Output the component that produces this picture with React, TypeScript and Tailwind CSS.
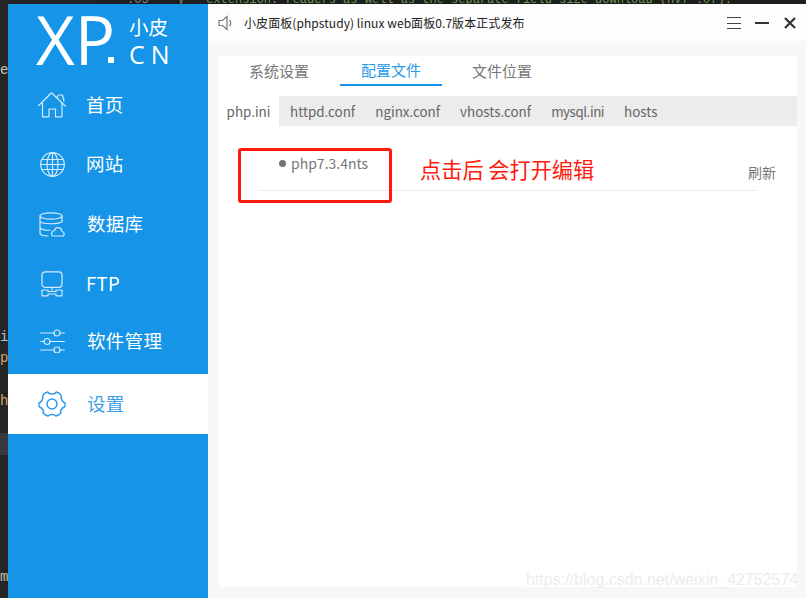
const font = "font-['Noto_Sans_CJK_SC','Noto_Sans',sans-serif]";

function NavIcon({ name, color }: { name: string; color: string }) {
  const p = { fill: "none", stroke: color, strokeWidth: 1.2, strokeLinecap: "round" as const, strokeLinejoin: "round" as const };
  if (name === "home")
    return (
      <svg width="28" height="26" viewBox="0 0 28 26" {...p}>
        <path d="M0.700 13.500 L13.500 0.800 L27.300 14" />
        <path d="M19 5.500 L20.500 3 H24.500 L26 9" />
        <path d="M4.500 11 V24.800 H11 V17 H17.500 V24.800 H24 V11" />
      </svg>
    );
  if (name === "globe")
    return (
      <svg width="25" height="25" viewBox="0 0 25 25" {...p}>
        <circle cx="12.500" cy="12.500" r="11.800" />
        <ellipse cx="12.500" cy="12.500" rx="5.500" ry="11.800" />
        <path d="M12.500 0.700 V24.300 M0.700 12.500 H24.300 M2.500 7.500 H22.500 M2.500 17.500 H22.500" />
      </svg>
    );
  if (name === "db")
    return (
      <svg width="26" height="25" viewBox="0 0 26 25" {...p}>
        <ellipse cx="12" cy="4" rx="11" ry="3.200" />
        <path d="M1 4 V21 C1 23 3 24 9 24 M23 4 V9 M1 9.500 C3 12.500 20 12.500 23 9.500 M1 16 C3 18 8 18.500 11 18" />
        <path d="M14 24 H23.500 C25.800 24 25.800 20 23 19.500 C22.500 15 16.500 14 15.500 18.500 C12.500 18.500 11.500 24 14 24 Z" />
      </svg>
    );
  if (name === "ftp")
    return (
      <svg width="22" height="26" viewBox="0 0 22 26" {...p}>
        <rect x="1" y="0.800" width="20" height="15.500" rx="3" />
        <path d="M11 16.300 V19 M1 19 H7 V20.500 H15 V19 H21 V24.800 H15 V23 H7 V24.800 H1 Z" />
      </svg>
    );
  if (name === "sliders")
    return (
      <svg width="25" height="24" viewBox="0 0 25 24" {...p}>
        <path d="M0.700 4 H14 M20 4 H24.300 M0.700 12.500 H4 M10 12.500 H24.300 M0.700 21 H14 M20 21 H24.300" />
        <circle cx="17" cy="4" r="3" />
        <circle cx="7" cy="12.500" r="3" />
        <circle cx="17" cy="21" r="3" />
      </svg>
    );
  return (
    <svg width="28" height="28" viewBox="0 0 28 28" fill="none" stroke={color} strokeWidth="1.5" strokeLinejoin="round">
      <path d="M9.500 2 C11 4.500 17 4.500 18.500 2 C20.500 2.500 22.500 4 23.500 6 C22.500 8.500 24.500 12 27 13 C27.200 15 27 16 26.500 17 C24 17.500 22 20.500 23 23 C21.500 24.500 20 25.500 18 26 C16.500 24 11.500 24 10 26 C8 25.500 6.500 24.500 5 23 C6 20.500 4 17.500 1.500 17 C1 16 0.800 15 1 13 C3.500 12 5.500 8.500 4.500 6 C5.500 4 7.500 2.500 9.500 2 Z" />
      <circle cx="14" cy="14" r="5" />
    </svg>
  );
}

function NavItem({ icon, label, h, pl, active }: { icon: string; label: string; h: string; pl: string; active?: boolean }) {
  return (
    <div className={`flex items-center pl-[29px] ${h} ${active ? "bg-white text-[#3d9fe8]" : "text-white"}`}>
      <div className="w-[30px] flex justify-center shrink-0">
        <NavIcon name={icon} color={active ? "#2f9be8" : "#d5ecfb"} />
      </div>
      <span className={`${pl} mb-[2px] text-[18.500px] leading-none tracking-[0.3px]`}>{label}</span>
    </div>
  );
}

const edge = "absolute left-0 w-[8px] overflow-hidden whitespace-nowrap text-[14px] leading-[16px] font-['Liberation_Mono',monospace]";

export default function App() {
  return (
    <div className={`relative w-[806px] h-[598px] overflow-hidden bg-[#252526] ${font}`}>
      <div className="ml-[96px] h-[4px] overflow-hidden whitespace-pre bg-[#1e1e1e] pl-[31px] font-['Liberation_Mono',monospace] text-[12px] leading-[0px] text-[#6a9955]">
        <span className="text-[#888888]">.03</span>{"    y   extension: readers as well as the separate field size download (Hv7 .07)."}
      </div>
      <div className="flex h-[594px]">
        <div className="w-[8px] shrink-0" />
        <aside className="w-[200px] shrink-0 bg-[#1594e8] flex flex-col">
          <div className="h-[70px] flex items-start pl-[28px] text-white">
            <span className="font-['Open_Sans',sans-serif] font-medium text-[67px] leading-[72px] mt-[-1px]">XP</span>
            <span className="mt-[53px] ml-[-7px] h-[6px] w-[6px] bg-white shrink-0" />
            <div className="ml-[15px] mt-[10px] flex flex-col">
              <span className="text-[19.500px] leading-[25px]">小皮</span>
              <span className="font-['Open_Sans',sans-serif] tracking-[6px] text-[25px] leading-[30px]">CN</span>
            </div>
          </div>
          <NavItem icon="home" label="首页" h="h-[60px] pt-[2px]" pl="pl-[19px]" />
          <NavItem icon="globe" label="网站" h="h-[60px]" pl="pl-[19px]" />
          <NavItem icon="db" label="数据库" h="h-[60px]" pl="pl-[20px]" />
          <NavItem icon="ftp" label="FTP" h="h-[60px]" pl="pl-[19px]" />
          <NavItem icon="sliders" label="软件管理" h="h-[60px] pb-[6px]" pl="pl-[20px]" />
          <NavItem icon="gear" label="设置" h="h-[60px]" pl="pl-[20px]" active />
        </aside>
        <main className="flex-1 bg-[#f7f7f7] flex flex-col min-w-0">
          <header className="h-[37px] bg-[#fdfdfd] flex items-center pl-[10px] pr-[10px] shrink-0">
            <svg width="16" height="16" viewBox="0 0 16 16" fill="none" stroke="#777" strokeWidth="1.2" className="mr-[10px]">
              <path d="M1 5.500 H4.500 L9 1.500 V14.500 L4.500 10.500 H1 Z" />
              <path d="M11.500 5 C13 6.500 13 9.500 11.500 11" />
            </svg>
            <span className="text-[12px] tracking-[0.07px] text-[#222]">小皮面板(phpstudy) linux web面板0.7版本正式发布</span>
            <div className="ml-auto flex items-center gap-[14px] pt-[1px]">
              <svg width="14" height="12" viewBox="0 0 14 12" stroke="#444" strokeWidth="1"><path d="M0 0.500 H14 M0 6.500 H14 M0 11.500 H14" /></svg>
              <svg width="14" height="12" viewBox="0 0 14 12" stroke="#333" strokeWidth="2"><path d="M0 6 H14" /></svg>
              <svg width="12" height="12" viewBox="0 0 12 12" stroke="#333" strokeWidth="2.200" className="ml-[1px]"><path d="M1 1 L11 11 M11 1 L1 11" /></svg>
            </div>
          </header>
          <div className="mt-[15px] ml-[10px] mr-[9px] mb-[11px] flex-1 bg-white flex flex-col">
            <div className="h-[40px] flex text-[15px] text-[#777]">
              <div className="w-[122px] h-[30px] flex items-center justify-center">系统设置</div>
              <div className="w-[102px] h-[30px] flex items-center justify-center text-[#2a9ae8] border-b-2 border-[#1594e8]">配置文件</div>
              <div className="w-[120px] h-[30px] flex items-center justify-center">文件位置</div>
            </div>
            <div className="h-[30px] bg-[#ececec] flex gap-[20px] text-[13.400px] text-[#666]">
              <div className="w-[61px] mr-[-9px] bg-white flex items-center justify-center">php.ini</div>
              <div className="flex items-center pt-[1px]">httpd.conf</div>
              <div className="flex items-center pt-[1px]">nginx.conf</div>
              <div className="flex items-center pt-[1px]">vhosts.conf</div>
              <div className="flex items-center pt-[1px] tracking-[-0.45px]">mysql.ini</div>
              <div className="flex items-center pt-[1px]">hosts</div>
            </div>
            <div className="mt-[24px] ml-[40px] mr-[40px] h-[41px] border-b border-[#ececec] flex justify-between">
              <div className="flex items-center h-[27px] pl-[21px] text-[14px] text-[#777]">
                <span className="w-[7px] h-[7px] rounded-full bg-[#6f7478] mr-[5px]" />
                php7.3.4nts
              </div>
              <div className="mt-[12px] h-[20px] flex items-center text-[14px] text-[#777] mr-[-19px]">刷新</div>
            </div>
          </div>
        </main>
      </div>
      <div className="absolute left-[238px] top-[148px] w-[154px] h-[55px] border-[3px] border-[#ff1a0d] rounded-[3px]" />
      <div className="absolute left-[420px] top-[154px] text-[21.200px] leading-[30px] text-[#ff1a0d]">点击后 会打开编辑</div>
      <div className="absolute left-[526px] top-[570px] font-['Liberation_Sans',sans-serif] text-[16px] leading-[20px] text-[#ececec]">https://blog.csdn.net/weixin_42752574</div>
      <div className={`${edge} top-[62px] text-[#c9c5a8]`}>e</div>
      <div className={`${edge} top-[329px] text-[#a9c4d8]`}>ic</div>
      <div className={`${edge} top-[350px] text-[#d7a46f]`}>p</div>
      <div className={`${edge} top-[393px] text-[#d7a46f]`}>hp</div>
      <div className="absolute left-0 top-[433px] w-[8px] h-[22px] bg-[#37373d]" />
      <div className={`${edge} top-[569px] text-[#c9c5a8]`}>m</div>
    </div>
  );
}
